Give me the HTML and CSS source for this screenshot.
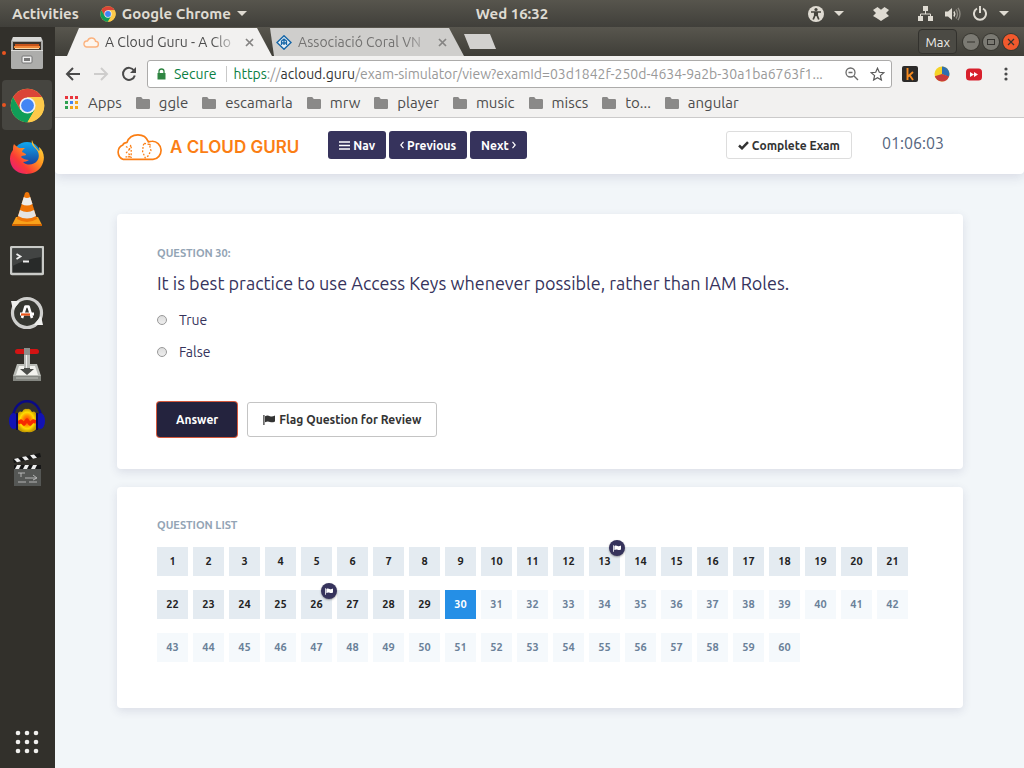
FILE: index.html
```
<!DOCTYPE html>
<html lang="en">
<head>
<meta charset="utf-8">
<title>A Cloud Guru - A Cloud Guru</title>
<meta name="viewport" content="width=device-width, initial-scale=1">
<link rel="stylesheet" href="styles.css">
</head>
<body class="desktop">

<svg class="defs" width="0" height="0" aria-hidden="true">
  <defs>
    <symbol id="chrome" viewBox="0 0 48 48">
      <circle cx="24" cy="24" r="23" fill="#fdc94a"/>
      <path d="M4.100 12.500A23 23 0 0 1 43.900 12.500H24L14 29.800Z" fill="#da4437"/>
      <path d="M4.100 12.500A23 23 0 0 0 24 47L34 29.700L14 29.700Z" fill="#109d58"/>
      <path d="M24 12.500H43.900A23 23 0 0 1 24 47L34 29.700Z" fill="#fdc94a"/>
      <circle cx="24" cy="24" r="11" fill="#eef2f8"/>
      <circle cx="24" cy="24" r="8.800" fill="#4285f4"/>
    </symbol>
    <symbol id="folder" viewBox="0 0 14 12">
      <path d="M1.200 0H5.200L6.800 2H12.800Q14 2 14 3.200V10.800Q14 12 12.800 12H1.200Q0 12 0 10.800V1.200Q0 0 1.200 0Z" fill="#8a8988"/>
    </symbol>
    <symbol id="caret" viewBox="0 0 10 5"><path d="M0 0H10L5 5Z" fill="currentColor"/></symbol>
    <symbol id="flag" viewBox="0 0 12 10">
      <path d="M0.300 0H1.500V10H0.300ZM2 1.200C4 0 5.500 0.500 7 1.200C8.500 1.900 10 1.500 12 0.600V6.400C10 7.500 8.500 7.600 7 6.900C5.500 6.200 4 6.200 2 7.200Z" fill="currentColor"/>
    </symbol>
    <symbol id="close" viewBox="0 0 9 9"><path d="M1 1L8 8M8 1L1 8" stroke="currentColor" stroke-width="1.700" fill="none"/></symbol>
  </defs>
</svg>

<header class="panel">
  <div class="panel-side">
    <button class="panel-item" type="button">Activities</button>
    <button class="panel-item" type="button">
      <svg width="16" height="16"><use href="#chrome"/></svg>
      Google Chrome
      <svg width="10" height="5"><use href="#caret"/></svg>
    </button>
  </div>
  <time class="panel-clock">Wed 16:32</time>
  <div class="panel-side panel-tray">
    <button class="panel-item" type="button" aria-label="Accessibility">
      <svg width="16" height="16" viewBox="0 0 16 16"><circle cx="8" cy="8" r="8" fill="currentColor"/><circle cx="8" cy="3.500" r="1.600" fill="#45443d"/><path d="M3 6H13M8 6V10M6.800 6V9.500L5.200 13.500M9.200 6V9.500L10.800 13.500" stroke="#45443d" stroke-width="1.700" fill="none"/></svg>
      <svg width="10" height="5"><use href="#caret"/></svg>
    </button>
    <button class="panel-item" type="button" aria-label="Dropbox">
      <svg width="16" height="14" viewBox="0 0 16 14"><path d="M4.500 0L8 2.800L11.500 0L16 3L13 6L16 9L12.500 11L8 14L3.500 11L0 9L3 6L0 3Z" fill="currentColor"/></svg>
    </button>
    <button class="panel-item panel-system" type="button" aria-label="System menu">
      <svg width="15" height="15" viewBox="0 0 15 15"><path d="M5 0H10V5H5ZM0 10H5V15H0ZM10 10H15V15H10Z" fill="currentColor"/><path d="M7.500 5V8M2.500 10V8H12.500V10" stroke="currentColor" fill="none"/></svg>
      <svg width="16" height="14" viewBox="0 0 16 14"><path d="M0 4.500H3L7 1V13L3 9.500H0Z" fill="currentColor"/><path d="M9 4.500Q10.500 7 9 9.500" stroke="currentColor" stroke-width="1.500" fill="none"/><path d="M11 2.500Q14 7 11 11.500M13 .8Q17 7 13 13.200" stroke="#8b8880" stroke-width="1.400" fill="none"/></svg>
      <svg width="14" height="15" viewBox="0 0 14 15"><path d="M4 2.500A6 6 0 1 0 10 2.500M7 0V7" stroke="currentColor" stroke-width="2" fill="none"/></svg>
      <svg width="10" height="5"><use href="#caret"/></svg>
    </button>
  </div>
</header>

<nav class="dock" aria-label="Applications">
  <button class="dock-app running" type="button" aria-label="Files">
    <svg width="34" height="36" viewBox="0 0 34 36"><path d="M3 2H31L33 6V32Q33 34 31 34H3Q1 34 1 32V6Z" fill="#a9a9a7"/><path d="M3 2H31L32 6H2Z" fill="#d8d8d6"/><path d="M3 7H31V17H3Z" fill="#3c332b"/><path d="M5 9H29V11H5Z" fill="#c9541a"/><path d="M4 11H30V13H4Z" fill="#f0873a"/><path d="M5 13H29V14H5Z" fill="#fbd9a6"/><path d="M1 15H33V32Q33 34 31 34H3Q1 34 1 32Z" fill="#adadab"/><path d="M1 15H33V16H1Z" fill="#dededc"/><rect x="12" y="21" width="10" height="7" rx="1" fill="#eee" stroke="#747474"/><path d="M14 23H20V26H14Z" fill="#777"/></svg>
  </button>
  <button class="dock-app running active" type="button" aria-label="Google Chrome">
    <svg width="35" height="35"><use href="#chrome"/></svg>
  </button>
  <button class="dock-app" type="button" aria-label="Firefox">
    <svg width="36" height="36" viewBox="0 0 36 36"><defs><linearGradient id="fox" x1="1" y1="0" x2="0" y2="1"><stop offset="0" stop-color="#fff04a"/><stop offset=".38" stop-color="#ff9a1f"/><stop offset=".68" stop-color="#fb3a36"/><stop offset="1" stop-color="#e3158d"/></linearGradient><linearGradient id="globe" x1="0" y1="0" x2="0" y2="1"><stop offset="0" stop-color="#11a8f0"/><stop offset="1" stop-color="#1c2a86"/></linearGradient></defs><circle cx="18" cy="17" r="14" fill="url(#globe)"/><path d="M23 1C22 5 24 7 27 10C30 13 31 18 28 22C25 26 18 27 14 23C16 23 18 22 20 21C17 21 14 20 12 18C13 16 15 17 17 16C17 14 14 14 13 13C13 11 15 10 16 9C13 9 11 9 10 9C8 8 6 6 5 5C4 7 4 9 4 11C0 16 0 23 4 29C10 37 26 37 32 28C37 20 35 12 30 8C30 10 31 11 30 12C27 9 24 5 23 1Z" fill="url(#fox)"/></svg>
  </button>
  <button class="dock-app" type="button" aria-label="VLC media player">
    <svg width="32" height="36" viewBox="0 0 32 36"><path d="M5 26H27L31 34Q31 35 30 35H2Q1 35 1 34Z" fill="#f9a11a"/><path d="M1 33H31V35H1Z" fill="#ce6404"/><path d="M14 2Q16 0 18 2L26 28Q16 34 6 28Z" fill="#ee7508"/><path d="M12.800 6Q16 8 19.200 6L21.500 13Q16 16 10.500 13Z" fill="#ececec"/><path d="M9 19Q16 23 23 19L25 25Q16 30 7 25Z" fill="#e4e4e4"/></svg>
  </button>
  <button class="dock-app" type="button" aria-label="Terminal">
    <svg width="34" height="30" viewBox="0 0 34 30"><rect x="1" y="1" width="32" height="27" rx="1" fill="#282a29" stroke="#c9cac7" stroke-width="2.500"/><path d="M2.500 2.500H31.500V11Q16 13 2.500 20Z" fill="#424443"/><path d="M6.500 8L10.500 10.500L6.500 13M13 15.500H19" stroke="#eee" stroke-width="1.800" fill="none"/></svg>
  </button>
  <button class="dock-app" type="button" aria-label="Software Updater">
    <svg width="34" height="34" viewBox="0 0 34 34"><circle cx="17" cy="17" r="14.500" fill="#363731" stroke="#cfcfcd" stroke-width="3.200"/><path d="M1 5L10 5L8 8L3 14ZM33 29L24 29L26 26L31 20Z" fill="#eeeeec"/><path d="M12 22L15.500 10.500H18.500L22 22" stroke="#fff" stroke-width="2.600" fill="none" stroke-linejoin="round"/><path d="M10 18H24" stroke="#fff" stroke-width="3"/><path d="M11 18.500H20" stroke="#ea5518" stroke-width="2.200"/></svg>
  </button>
  <button class="dock-app" type="button" aria-label="Transmission">
    <svg width="30" height="36" viewBox="0 0 30 36"><path d="M5 17H25L29 29V34H1V29Z" fill="#b9bbb6"/><path d="M7 19H23L26 28H4Z" fill="#f2f2ee"/><path d="M1 29H29V34H1Z" fill="#858782"/><path d="M4 31H26" stroke="#bdbfba"/><path d="M8 22H12V8H18V22H22L15 28Z" fill="#4b4d4a"/><path d="M12 7H18V21H12Z" fill="#babcb8"/><path d="M14 7H15V21H14Z" fill="#eee"/><rect x="3" y="2" width="24" height="5" rx="2.500" fill="#d31313"/><path d="M12 1H18V8H12Z" fill="#8d8f8c"/></svg>
  </button>
  <button class="dock-app" type="button" aria-label="Audacity">
    <svg width="36" height="34" viewBox="0 0 36 34"><defs><radialGradient id="wave"><stop offset="0" stop-color="#ff3c00"/><stop offset=".4" stop-color="#ff8a00"/><stop offset=".7" stop-color="#ffdc00"/><stop offset="1" stop-color="#c79c00"/></radialGradient></defs><path d="M8 15Q10 10 13 12Q15 8 18 9Q21 8 23 12Q26 10 28 15V28Q25 33 18 32Q11 33 8 28Z" fill="url(#wave)"/><path d="M9 23L12 21L15 24L18 20L21 24L24 21L27 22" stroke="#f62800" stroke-width="3.500" fill="none" stroke-linejoin="round"/><path d="M4 20C3 -5 33 -5 32 20" stroke="#0a0a85" stroke-width="2.500" fill="none"/><ellipse cx="4.500" cy="21" rx="4.500" ry="8" fill="#1212b4"/><ellipse cx="31.500" cy="21" rx="4.500" ry="8" fill="#1212b4"/><path d="M7 13H9V30H7ZM27 13H29V30H27Z" fill="#05055c"/></svg>
  </button>
  <button class="dock-app" type="button" aria-label="OpenShot">
    <svg width="32" height="36" viewBox="0 0 32 36"><path d="M3 15H30V35H3Z" fill="#555755"/><path d="M3 14H30V18H3Z" fill="#161616"/><path d="M4 18L6 14H10L8 18ZM12 18L14 14H18L16 18ZM20 18L22 14H26L24 18Z" fill="#eee"/><path d="M2 8L29 2L30 6L3 12Z" fill="#161616"/><path d="M3 8L7 7L10 10.300L6 11.300ZM11 6L15 5.200L18 8.500L14 9.400ZM19 4.300L23 3.400L26 6.800L22 7.700Z" fill="#eee"/><path d="M7 22H14M10 22V26M14 27H25M22 24L26 27L22 29M7 31H15M18 31H26" stroke="#ccc" stroke-width=".8" fill="none"/></svg>
  </button>
  <button class="dock-grid" type="button" aria-label="Show Applications">
    <svg width="24" height="24" viewBox="0 0 24 24" fill="#f1f0ee"><circle cx="3" cy="3" r="2.300"/><circle cx="12" cy="3" r="2.300"/><circle cx="21" cy="3" r="2.300"/><circle cx="3" cy="12" r="2.300"/><circle cx="12" cy="12" r="2.300"/><circle cx="21" cy="12" r="2.300"/><circle cx="3" cy="21" r="2.300"/><circle cx="12" cy="21" r="2.300"/><circle cx="21" cy="21" r="2.300"/></svg>
  </button>
</nav>

<div class="browser">
  <div class="tabstrip">
    <div class="tab tab-current">
      <svg width="16" height="11" viewBox="0 0 16 11"><path d="M3.500 10H12.500A2.800 2.800 0 0 0 12.500 4.200Q12 1 8.500 1Q5.500 1 4.500 4A3 3 0 0 0 3.500 10Z" fill="#fdf6ef" stroke="#fbb27e" stroke-width="1.400"/></svg>
      <span class="tab-title">A Cloud Guru - A Clo</span>
      <button class="tab-close" type="button" aria-label="Close tab"><svg width="9" height="9"><use href="#close"/></svg></button>
    </div>
    <div class="tab tab-back">
      <svg width="16" height="15" viewBox="0 0 16 15"><path d="M8 .8L15 7.500L8 14.200L1 7.500Z" fill="#e8f0f6" stroke="#1767a8" stroke-width="1.500"/><path d="M5.500 10V6L8 4L10.500 6V10M5 8H11M8 5V10" stroke="#1767a8" stroke-width="1.300" fill="none"/></svg>
      <span class="tab-title">Associació Coral VN</span>
      <button class="tab-close" type="button" aria-label="Close tab"><svg width="9" height="9"><use href="#close"/></svg></button>
    </div>
    <button class="tab-new" type="button" aria-label="New tab"></button>
    <div class="window-controls">
      <button class="profile" type="button">Max</button>
      <button class="wbtn" type="button" aria-label="Minimize"><svg width="10" height="10" viewBox="0 0 10 10"><path d="M1 5H9" stroke="currentColor"/></svg></button>
      <button class="wbtn" type="button" aria-label="Maximize"><svg width="10" height="10" viewBox="0 0 10 10"><rect x="1.500" y="2.500" width="7" height="5" fill="none" stroke="currentColor"/></svg></button>
      <button class="wbtn wbtn-close" type="button" aria-label="Close"><svg width="10" height="10" viewBox="0 0 10 10"><path d="M2 2L8 8M8 2L2 8" stroke="currentColor" stroke-width="1.200"/></svg></button>
    </div>
  </div>

  <div class="toolbar">
    <button class="tool" type="button" aria-label="Back"><svg width="16" height="16" viewBox="0 0 16 16"><path d="M15 8H2M8 2L2 8L8 14" stroke="#4a4a4a" stroke-width="2" fill="none"/></svg></button>
    <button class="tool" type="button" aria-label="Forward"><svg width="16" height="16" viewBox="0 0 16 16"><path d="M1 8H14M8 2L14 8L8 14" stroke="#cecdcc" stroke-width="2" fill="none"/></svg></button>
    <button class="tool" type="button" aria-label="Reload"><svg width="16" height="16" viewBox="0 0 16 16"><path d="M13 4.500A6 6 0 1 0 13.800 9.500" stroke="#4a4a4a" stroke-width="2" fill="none"/><path d="M15 1V7H9Z" fill="#4a4a4a"/></svg></button>
    <div class="omnibox">
      <svg width="9" height="12" viewBox="0 0 9 12"><path d="M.5 5H8.500V11.500H.5Z" fill="#2f8542"/><path d="M2 5V3.300Q2 1 4.500 1Q7 1 7 3.300V5" stroke="#2f8542" stroke-width="1.300" fill="none"/></svg>
      <span class="secure">Secure</span>
      <span class="url"><span class="url-scheme">https</span>://<span class="url-host">acloud.guru</span>/exam-simulator/view?examId=03d1842f-250d-4634-9a2b-30a1ba6763f1...</span>
      <button class="tool" type="button" aria-label="Zoom"><svg width="14" height="14" viewBox="0 0 14 14"><circle cx="5.500" cy="5.500" r="4.500" stroke="#6a6a6a" stroke-width="1.300" fill="none"/><path d="M9 9L13 13M3.500 5.500H7.500" stroke="#6a6a6a" stroke-width="1.400"/></svg></button>
      <button class="tool" type="button" aria-label="Bookmark this page"><svg width="15" height="14" viewBox="0 0 15 14"><path d="M7.500 1.200L9.300 5.300L13.800 5.700L10.400 8.600L11.400 13L7.500 10.700L3.600 13L4.600 8.600L1.200 5.700L5.700 5.300Z" fill="none" stroke="#5a5a5a" stroke-width="1.200"/></svg></button>
    </div>
    <div class="extensions">
      <button class="tool" type="button" aria-label="Kindle sender"><svg width="16" height="16" viewBox="0 0 16 16"><rect width="16" height="16" rx="2" fill="#2c2a29"/><path d="M5.500 2V14M11 6L6 10.500M7.500 9L11 14" stroke="#f58a1f" stroke-width="1.900" fill="none"/></svg></button>
      <button class="tool" type="button" aria-label="Statistics"><svg width="16" height="16" viewBox="0 0 16 16"><circle cx="8" cy="8" r="7.500" fill="#f5d327"/><path d="M8 8V.5A7.500 7.500 0 0 1 14.800 11Z" fill="#2f6fb0"/><path d="M8 8L15 10.500A7.500 7.500 0 0 1 .8 10.200Z" fill="#c83c3c"/></svg></button>
      <button class="tool" type="button" aria-label="Video speed"><svg width="16" height="13" viewBox="0 0 16 13"><rect y=".5" width="16" height="12" rx="3.500" fill="#d8202c"/><path d="M4 4L8 6.500L4 9ZM8 4L12 6.500L8 9Z" fill="#fff"/></svg></button>
      <button class="tool" type="button" aria-label="Menu"><svg width="16" height="14" viewBox="0 0 16 14" fill="#4a4a4a"><circle cx="8" cy="2" r="1.600"/><circle cx="8" cy="7" r="1.600"/><circle cx="8" cy="12" r="1.600"/></svg></button>
    </div>
  </div>

  <nav class="bookmarks" aria-label="Bookmarks">
    <a href="#"><svg width="14" height="14" viewBox="0 0 14 14"><path d="M0 0H3V3H0ZM5 0H8V3H5ZM10 0H13V3H10Z" fill="#e8353c"/><path d="M5 5H8V8H5Z" fill="#4285f4"/><path d="M10 5H13V8H10ZM5 10H8V13H5ZM10 10H13V13H10Z" fill="#f4a71c"/><path d="M0 5H3V8H0ZM0 10H3V13H0Z" fill="#2fa050"/></svg>Apps</a>
    <a href="#"><svg width="14" height="12"><use href="#folder"/></svg>ggle</a>
    <a href="#"><svg width="14" height="12"><use href="#folder"/></svg>escamarla</a>
    <a href="#"><svg width="14" height="12"><use href="#folder"/></svg>mrw</a>
    <a href="#"><svg width="14" height="12"><use href="#folder"/></svg>player</a>
    <a href="#"><svg width="14" height="12"><use href="#folder"/></svg>music</a>
    <a href="#"><svg width="14" height="12"><use href="#folder"/></svg>miscs</a>
    <a href="#"><svg width="14" height="12"><use href="#folder"/></svg>to...</a>
    <a href="#"><svg width="14" height="12"><use href="#folder"/></svg>angular</a>
  </nav>

  <div class="page">
    <header class="site-header">
      <div class="container site-bar">
        <a class="logo" href="#">
          <svg width="45" height="27" viewBox="3 1 43 26"><path d="M9 25.500H37.500A8 8.500 0 0 0 36.500 8Q35 8 33 8.500Q30.500 1.800 23 1.800Q15 1.800 12.500 9Q9 9.500 8.500 11.500A7.500 7.500 0 0 0 9 25.500Z" fill="none" stroke="#fb7e14" stroke-width="1.600"/><path d="M11.500 13L15 15.500L16.500 10M15 15.500L12 19L15.500 21L13 24.500M16.500 13V24M11 23H17M29 10L34 11L35.500 17L33 22L30 24L27.500 18L28 12ZM33 7.500L35 12" fill="none" stroke="#fb7e14" stroke-width="1.200" stroke-dasharray="1.800 1.500"/></svg>
          <span class="logo-name">A CLOUD GURU</span>
        </a>
        <div class="exam-nav">
          <button class="btn btn-dark" type="button"><svg width="11" height="9" viewBox="0 0 11 9"><path d="M0 1H11M0 4.500H11M0 8H11" stroke="currentColor" stroke-width="1.500"/></svg>Nav</button>
          <button class="btn btn-dark" type="button"><svg width="4" height="8" viewBox="0 0 4 8"><path d="M3.500 .8L.8 4L3.500 7.200" stroke="currentColor" stroke-width="1.200" fill="none"/></svg>Previous</button>
          <button class="btn btn-dark" type="button">Next<svg width="4" height="8" viewBox="0 0 4 8"><path d="M.5 .8L3.200 4L.5 7.200" stroke="currentColor" stroke-width="1.200" fill="none"/></svg></button>
        </div>
        <button class="btn btn-outline complete" type="button"><svg width="11" height="9" viewBox="0 0 11 9"><path d="M1 4.500L4 7.300L10 1.200" stroke="currentColor" stroke-width="2.500" fill="none"/></svg>Complete Exam</button>
        <time class="timer">01:06:03</time>
      </div>
    </header>

    <main class="container content">
      <form class="card">
        <h2 class="label">QUESTION 30:</h2>
        <p class="question">It is best practice to use Access Keys whenever possible, rather than IAM Roles.</p>
        <div class="choices">
          <label class="choice"><input type="radio" name="answer" value="true">True</label>
          <label class="choice"><input type="radio" name="answer" value="false">False</label>
        </div>
        <div class="actions">
          <button class="btn btn-large btn-answer" type="button">Answer</button>
          <button class="btn btn-large btn-outline btn-flag" type="button"><svg width="12" height="10"><use href="#flag"/></svg>Flag Question for Review</button>
        </div>
      </form>

      <section class="card card-list">
        <h2 class="label">QUESTION LIST</h2>
        <div class="questions">
          <button class="q done" type="button">1</button>
          <button class="q done" type="button">2</button>
          <button class="q done" type="button">3</button>
          <button class="q done" type="button">4</button>
          <button class="q done" type="button">5</button>
          <button class="q done" type="button">6</button>
          <button class="q done" type="button">7</button>
          <button class="q done" type="button">8</button>
          <button class="q done" type="button">9</button>
          <button class="q done" type="button">10</button>
          <button class="q done" type="button">11</button>
          <button class="q done" type="button">12</button>
          <button class="q done" type="button">13<span class="badge"><svg width="8" height="7"><use href="#flag"/></svg></span></button>
          <button class="q done" type="button">14</button>
          <button class="q done" type="button">15</button>
          <button class="q done" type="button">16</button>
          <button class="q done" type="button">17</button>
          <button class="q done" type="button">18</button>
          <button class="q done" type="button">19</button>
          <button class="q done" type="button">20</button>
          <button class="q done" type="button">21</button>
          <button class="q done" type="button">22</button>
          <button class="q done" type="button">23</button>
          <button class="q done" type="button">24</button>
          <button class="q done" type="button">25</button>
          <button class="q done" type="button">26<span class="badge"><svg width="8" height="7"><use href="#flag"/></svg></span></button>
          <button class="q done" type="button">27</button>
          <button class="q done" type="button">28</button>
          <button class="q done" type="button">29</button>
          <button class="q current" type="button">30</button>
          <button class="q" type="button">31</button>
          <button class="q" type="button">32</button>
          <button class="q" type="button">33</button>
          <button class="q" type="button">34</button>
          <button class="q" type="button">35</button>
          <button class="q" type="button">36</button>
          <button class="q" type="button">37</button>
          <button class="q" type="button">38</button>
          <button class="q" type="button">39</button>
          <button class="q" type="button">40</button>
          <button class="q" type="button">41</button>
          <button class="q" type="button">42</button>
          <button class="q" type="button">43</button>
          <button class="q" type="button">44</button>
          <button class="q" type="button">45</button>
          <button class="q" type="button">46</button>
          <button class="q" type="button">47</button>
          <button class="q" type="button">48</button>
          <button class="q" type="button">49</button>
          <button class="q" type="button">50</button>
          <button class="q" type="button">51</button>
          <button class="q" type="button">52</button>
          <button class="q" type="button">53</button>
          <button class="q" type="button">54</button>
          <button class="q" type="button">55</button>
          <button class="q" type="button">56</button>
          <button class="q" type="button">57</button>
          <button class="q" type="button">58</button>
          <button class="q" type="button">59</button>
          <button class="q" type="button">60</button>
        </div>
      </section>
    </main>
  </div>
</div>
</body>
</html>
```

FILE: styles.css
```
* { box-sizing: border-box; }

.desktop {
  margin: 0;
  height: 100vh;
  display: grid;
  grid-template: 27px minmax(0, 1fr) / 55px minmax(0, 1fr);
  overflow: hidden;
  background: #32302b;
  font-family: Ubuntu, "Noto Sans", "Open Sans", sans-serif;
  font-size: 14px;
}

.defs { position: absolute; }
svg { display: block; flex: none; }
button { margin: 0; padding: 0; border: 0; background: none; color: inherit; font: inherit; }

/* Top panel */
.panel {
  grid-column: 1 / -1;
  display: grid;
  grid-template-columns: 1fr auto 1fr;
  align-items: center;
  padding: 0 12px;
  background: linear-gradient(#57554d, #403f3a);
  color: #dfdbd2;
  font-size: 15px;
  font-weight: 700;
}
.panel-side { display: flex; align-items: center; gap: 21px; }
.panel-item { display: flex; align-items: center; gap: 6px; white-space: nowrap; }
.panel-tray { justify-content: flex-end; gap: 29px; padding-right: 3px; }
.panel-tray .panel-item { gap: 10px; }
.panel-tray .panel-system { gap: 12px; }

/* Dock */
.dock {
  display: flex;
  flex-direction: column;
  gap: 2px;
  padding: 1px 3px 14px 2px;
  background: #32302b;
}
.dock-app {
  position: relative;
  display: grid;
  place-items: center;
  height: 50px;
  border-radius: 4px;
}
.dock-app.active { background: #464540; }
.dock-app.running::before {
  content: "";
  position: absolute;
  left: 0;
  top: 23px;
  width: 4px;
  height: 4px;
  border-radius: 50%;
  background: #e95420;
}
.dock-grid { margin: auto auto 0; }

/* Browser */
.browser { display: flex; flex-direction: column; min-width: 0; min-height: 0; background: #f2f1f0; color: #4c4c4c; }
.tabstrip {
  display: flex;
  align-items: flex-end;
  height: 29px;
  padding-left: 12px;
  background: linear-gradient(#58564e, #3f3e38);
}
.tab {
  display: flex;
  align-items: center;
  width: 205px;
  height: 28px;
  padding: 0 18px 0 16px;
  clip-path: polygon(12px 0, 190px 0, 100% 100%, 0 100%);
  background: #f2f1f0;
}
.tab-current { z-index: 1; }
.tab-back { width: 198px; margin-left: -6px; padding: 0 17px 0 10px; background: #cfcecc; color: #747372; clip-path: polygon(4px 0, 183px 0, 100% 100%, 8px 100%); }
.tab-title {
  flex: 1;
  min-width: 0;
  margin: 0 6px;
  white-space: nowrap;
  -webkit-mask-image: linear-gradient(90deg, #000 80%, transparent);
  mask-image: linear-gradient(90deg, #000 80%, transparent);
}
.tab-close { color: #858483; }
.tab-new {
  align-self: center;
  width: 32px;
  height: 15px;
  background: #d2d1cf;
  clip-path: polygon(0 0, 26px 0, 100% 100%, 6px 100%);
}
.window-controls { display: flex; align-items: center; gap: 4px; height: 29px; margin-left: auto; padding-right: 5px; }
.profile {
  height: 25px;
  margin-right: 2px;
  padding: 0 6px;
  border: 1px solid #32312d;
  border-radius: 4px;
  background: #4b4a44;
  color: #f0eeea;
  font-size: 13px;
}
.wbtn {
  display: grid;
  place-items: center;
  width: 16px;
  height: 16px;
  border-radius: 50%;
  background: #7b7a73;
  color: #34332f;
  box-shadow: 0 0 0 1px #383731;
}
.wbtn-close { background: #f2592d; }

.toolbar { display: flex; align-items: center; height: 36px; padding: 0 10px; gap: 12px; }
.tool { display: grid; place-items: center; flex: none; }
.omnibox {
  display: flex;
  align-items: center;
  flex: 1;
  min-width: 0;
  height: 28px;
  margin-left: -2px;
  padding: 0 6px 0 9px;
  border: 1px solid #acabaa;
  border-radius: 3px;
  background: #fff;
}
.omnibox .tool { margin-left: 11px; }
.secure { margin-left: 8px; padding-right: 9px; border-right: 1px solid #c9c9c9; line-height: 16px; color: #0b8043; }
.url { flex: 1; min-width: 0; margin-left: 7px; white-space: nowrap; color: #999; }
.url-scheme { color: #0b8043; }
.url-host { color: #333; }
.extensions { display: flex; align-items: center; gap: 16px; margin-left: -2px; }

.bookmarks {
  display: flex;
  gap: 14px;
  height: 26px;
  padding: 0 10px 4px;
  border-bottom: 1px solid #cbcaca;
  font-size: 15px;
}
.bookmarks a { display: flex; align-items: center; gap: 9px; color: #4c4c4c; text-decoration: none; white-space: nowrap; }

/* Page */
.page { flex: 1; min-height: 0; overflow: hidden; background: #f2f6f9; }
.container { max-width: 970px; margin: 0 auto; padding: 0 61px 0 62px; }
.site-header {
  position: relative;
  background: #fff;
  border-radius: 0 0 4px 4px;
  box-shadow: 0 3px 12px rgba(50, 50, 100, .14);
}
.site-bar { display: flex; align-items: center; height: 56px; padding-bottom: 2px; }
.logo { display: flex; align-items: center; gap: 8px; padding-top: 4px; color: #fb7e14; text-decoration: none; }
.logo-name { font: 600 17px/20px Inter, sans-serif; }
.exam-nav { display: flex; gap: 3px; margin-left: 29px; }
.btn {
  display: flex;
  align-items: center;
  justify-content: center;
  gap: 3px;
  height: 28px;
  padding: 0 11px;
  border-radius: 3px;
  font-size: 12px;
  font-weight: 700;
  white-space: nowrap;
}
.btn-dark { background: #36335c; color: #fff; }
.btn-outline { border: 1px solid #ddd; background: #fff; color: #333; }
.complete { margin-left: auto; }
.timer { margin: 0 19px 5px 30px; font-size: 16px; line-height: 20px; color: #54657e; }

.content { display: flex; flex-direction: column; gap: 18px; padding-top: 40px; }
.card {
  padding: 32px 40px;
  border-radius: 4px;
  background: #fff;
  box-shadow: 0 3px 10px rgba(50, 50, 100, .12);
}
.label { margin: 0; font-size: 11px; line-height: 14px; font-weight: 700; color: #93a4b5; }
.question { margin: 11px 0 0; font-size: 18px; line-height: 24px; color: #36335c; }
.choices { display: flex; flex-direction: column; gap: 12px; margin-top: 15px; }
.choice { display: flex; align-items: center; gap: 12px; line-height: 20px; color: #36335c; }
.choice input {
  appearance: none;
  width: 10px;
  height: 10px;
  margin: 0;
  border: 1px solid #999;
  border-radius: 50%;
  background: linear-gradient(#ddd, #eee);
}
.actions { display: flex; gap: 10px; margin-top: 40px; }
.btn-large { height: 35px; }
.btn-answer { padding: 0 19px; background: #24233e; color: #fff; box-shadow: 0 0 0 1px #d4583c; }
.btn-flag { padding: 0 15px; border-color: #c4c4c4; gap: 4px; }

.card-list { padding: 31px 40px 46px; }
.questions { display: flex; flex-wrap: wrap; gap: 14px 5px; margin-top: 15px; }
.q {
  position: relative;
  width: 31px;
  height: 29px;
  padding-bottom: 2px;
  background: #f5f9fc;
  color: #6b8199;
  font-size: 11px;
  font-weight: 700;
}
.q.done { background: #e4ebf1; color: #222; }
.q.current { background: #258fe6; color: #fff; }
.badge {
  position: absolute;
  top: -7px;
  right: -5px;
  z-index: 1;
  display: grid;
  place-items: center;
  width: 16px;
  height: 16px;
  border-radius: 50%;
  background: #36335c;
  color: #fff;
  box-shadow: 0 1px 2px rgba(0, 0, 0, .35);
}
```
